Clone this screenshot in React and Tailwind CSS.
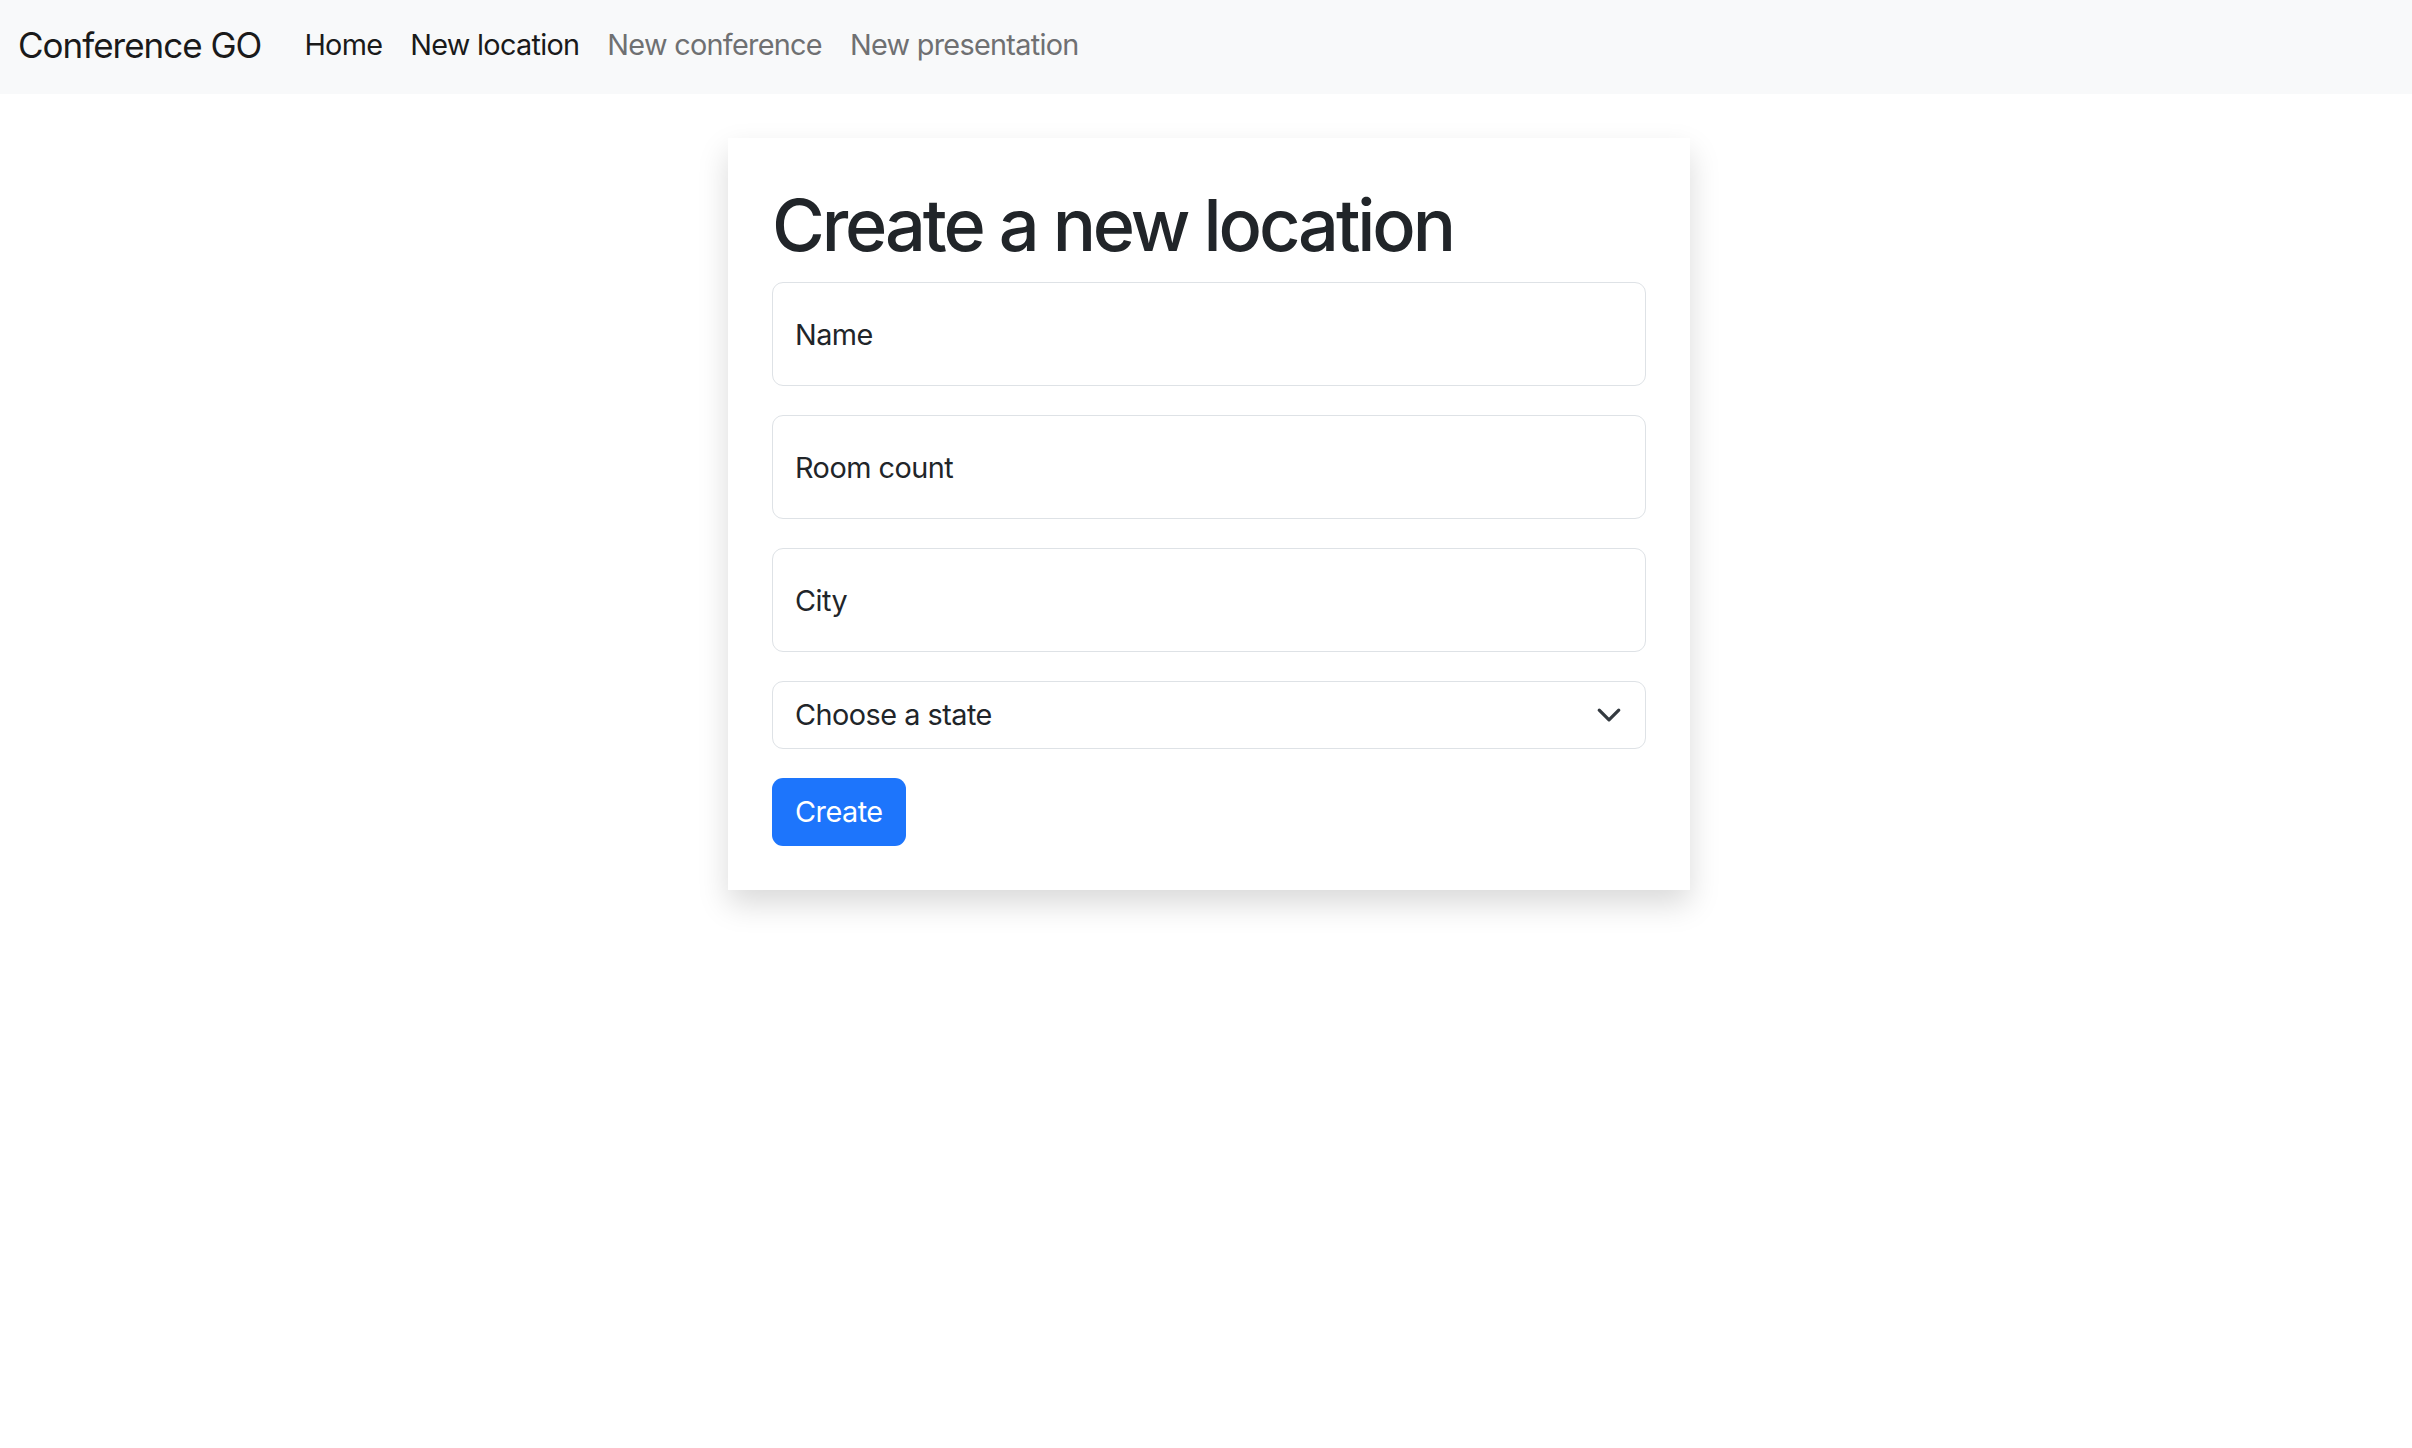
import React from 'react'

const font = { fontFamily: 'Inter, "Noto Sans", "Liberation Sans", sans-serif' }

function NavBar() {
  return (
    <nav className="h-[94px] bg-[#f8f9fa] flex items-center px-[18px] pb-[5px]">
      <a className="text-[35px] leading-[54px] text-[#1a1a1a] mr-[29px] tracking-[-1px]">Conference GO</a>
      <div className="flex items-center">
        <a className="px-[14px] text-[28.8px] leading-[43px] text-[#1a1a1a] tracking-[-0.7px]">Home</a>
        <a className="px-[14px] text-[28.8px] leading-[43px] text-[#1a1a1a] tracking-[-0.7px]">New location</a>
        <a className="px-[14px] text-[28.8px] leading-[43px] text-[#6f7072] tracking-[-0.7px]">New conference</a>
        <a className="px-[14px] text-[28.8px] leading-[43px] text-[#6f7072] tracking-[-0.7px]">New presentation</a>
      </div>
    </nav>
  )
}

function Field({ label }) {
  return (
    <div className="mb-[29px]">
      <input
        placeholder={label}
        className="w-full h-[104px] border-[1.8px] border-[#dee2e6] rounded-[11px] px-[22px] text-[28.8px] tracking-[-0.5px] text-[#212529] placeholder:text-[#212529] outline-none bg-white"
      />
    </div>
  )
}

export default function App() {
  return (
    <div style={font} className="min-h-[1448px] bg-white text-[#212529]">
      <NavBar />
      <div className="flex justify-center pl-[6px] mt-[44px]">
        <div className="w-[962px] bg-white p-[44px] shadow-[0_14px_29px_rgba(0,0,0,0.15)]">
          <h1 className="text-[72px] leading-[86px] font-medium mb-[14px] tracking-[-3.1px]">Create a new location</h1>
          <form>
            <Field label="Name" />
            <Field label="Room count" />
            <Field label="City" />
            <div className="relative mb-[29px]">
              <select className="w-full h-[68px] appearance-none border-[1.8px] border-[#dee2e6] rounded-[11px] pl-[22px] pr-[80px] text-[28.8px] tracking-[-0.5px] text-[#212529] bg-white outline-none">
                <option>Choose a state</option>
              </select>
              <svg
                className="absolute right-[24px] top-[21px] w-[26px] h-[26px] pointer-events-none"
                viewBox="0 0 16 16"
                fill="none"
                stroke="#343a40"
                strokeWidth="2"
                strokeLinecap="round"
                strokeLinejoin="round"
              >
                <path d="m2 5 6 6 6-6" />
              </svg>
            </div>
            <button
              type="button"
              className="h-[68px] px-[23px] rounded-[11px] bg-[#1d75fc] text-white text-[28.8px] tracking-[-0.5px] leading-none"
            >
              Create
            </button>
          </form>
        </div>
      </div>
    </div>
  )
}
